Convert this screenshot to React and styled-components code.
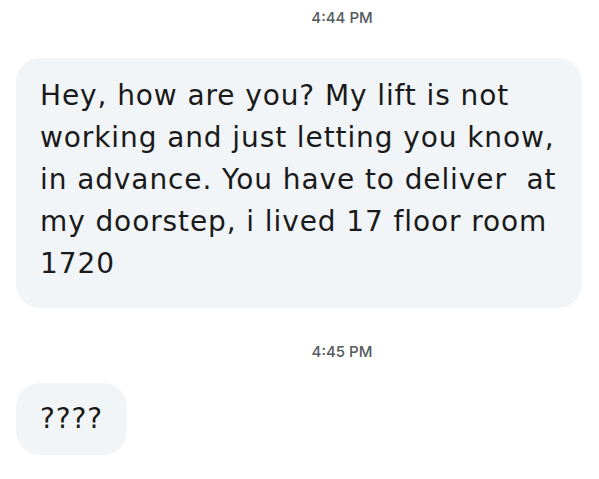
import React from "react";
import styled, { createGlobalStyle } from "styled-components";

const GlobalStyle = createGlobalStyle`
  body {
    margin: 0;
    padding: 0;
    background: #ffffff;
  }
`;

const Thread = styled.div`
  display: flex;
  flex-direction: column;
  align-items: flex-start;
  padding: 8px 17px 0 16px;
  font-family: "DejaVu Sans", "Noto Sans", sans-serif;
`;

const Stamp = styled.div`
  align-self: stretch;
  text-align: center;
  padding-left: 86px;
  font-family: Inter, "Noto Sans", sans-serif;
  font-size: 15px;
  font-weight: 500;
  line-height: 20px;
  color: #555a60;
  margin-bottom: ${p => p.gap}px;
  margin-top: ${p => p.top || 0}px;
`;

const Bubble = styled.div`
  box-sizing: border-box;
  background: #f2f5f8;
  border-radius: 24px;
  padding: ${p => (p.wide ? "17px 24px 23px" : "15px 24px")};
  font-size: 28px;
  line-height: 42px;
  letter-spacing: 0.9px;
  color: #1a1a1a;
  align-self: ${p => (p.wide ? "stretch" : "flex-start")};
  white-space: pre-wrap;
`;

export default () => (
  <>
    <GlobalStyle />
    <Thread>
      <Stamp gap={30}>4:44 PM</Stamp>
      <Bubble wide>
        Hey, how are you? My lift is not
        <br />
        working and just letting you know,
        <br />
        in advance. You have to deliver{"  "}at
        <br />
        my doorstep, i lived 17 floor room
        <br />
        1720
      </Bubble>
      <Stamp top={34} gap={21}>4:45 PM</Stamp>
      <Bubble>????</Bubble>
    </Thread>
  </>
);
